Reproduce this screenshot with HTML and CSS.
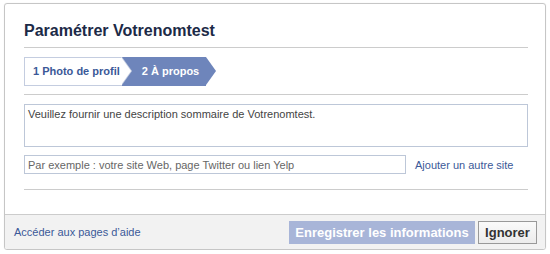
FILE: index.html
```html
<!DOCTYPE html>
<html>
<head>
    <meta charset="UTF-8">
    <title>Paramétrer Votrenomtest</title>
    <link rel="stylesheet" href="styles.css">
</head>
<body>
    <div class="dialog">
        <div class="dialog-body">
            <h2 class="dialog-title">Paramétrer Votrenomtest</h2>
            <div class="steps">
                <div class="step step-done">1 Photo de profil</div>
                <div class="step step-current">2 À propos</div>
            </div>
            <div class="rule"></div>
            <textarea class="about" placeholder="Veuillez fournir une description sommaire de Votrenomtest."></textarea>
            <div class="site-row">
                <input type="text" class="site" placeholder="Par exemple : votre site Web, page Twitter ou lien Yelp">
                <a href="#" class="link">Ajouter un autre site</a>
            </div>
            <div class="rule rule-end"></div>
        </div>
        <div class="dialog-footer">
            <a href="#" class="link">Accéder aux pages d’aide</a>
            <div class="buttons">
                <button class="btn btn-save" disabled>Enregistrer les informations</button>
                <button class="btn btn-skip">Ignorer</button>
            </div>
        </div>
    </div>
</body>
</html>
```

FILE: styles.css
```css
* {
    margin: 0;
    padding: 0;
    box-sizing: border-box;
}
body {
    font-family: "Liberation Sans", Arial, sans-serif;
    font-size: 11px;
    color: #333;
    background-color: #fff;
}
.dialog {
    width: 542px;
    height: 247px;
    margin: 3px 0 0 4px;
    border: 1px solid #c6c6c6;
    border-radius: 3px;
    box-shadow: 0 0 1px #ddd;
    display: flex;
    flex-direction: column;
    overflow: hidden;
}
.dialog-body {
    flex: 1;
    padding: 17px 17px 0 19px;
}
.dialog-title {
    font-size: 16px;
    line-height: 20px;
    color: #1c2a47;
    padding-bottom: 6px;
    border-bottom: 1px solid #cccccc;
}
.rule {
    border-bottom: 1px solid #cccccc;
}
.rule-end {
    margin-top: 15px;
}

/* étapes */
.steps {
    display: flex;
    height: 29px;
    margin: 9px 0 8px;
}
.step {
    position: relative;
    font-weight: bold;
    line-height: 27px;
    white-space: nowrap;
}
.step-done {
    z-index: 2;
    color: #3b5998;
    background-color: #fff;
    border: 1px solid #c4cde0;
    border-right: none;
    padding: 0 2px 0 8px;
}
.step-done:before,
.step-done:after {
    content: "";
    position: absolute;
    top: -1px;
    right: -10px;
    border-top: 14.5px solid transparent;
    border-bottom: 14.5px solid transparent;
    border-left: 10px solid #c4cde0;
}
.step-done:after {
    right: -9px;
    border-left-color: #fff;
}
.step-current {
    z-index: 1;
    color: #fff;
    background-color: #6e85bb;
    padding: 1px 7px 0 20px;
}
.step-current:after {
    content: "";
    position: absolute;
    top: 0;
    right: -10px;
    border-top: 14.5px solid transparent;
    border-bottom: 14.5px solid transparent;
    border-left: 10px solid #6e85bb;
}

/* champs */
.about {
    display: block;
    width: 100%;
    height: 43px;
    margin-top: 9px;
    padding: 3px;
    border: 1px solid #bdc7d8;
    resize: none;
    font-family: inherit;
    font-size: 11px;
    color: #333;
    outline: none;
}
.about::placeholder {
    color: #444;
}
.site-row {
    display: flex;
    align-items: center;
    margin-top: 8px;
}
.site {
    width: 382px;
    height: 19px;
    padding: 0 3px;
    border: 1px solid #bdc7d8;
    font-family: inherit;
    font-size: 11px;
    outline: none;
}
.site::placeholder {
    color: #666;
}
.site-row .link {
    margin-left: 9px;
}
.link {
    color: #3b5998;
    text-decoration: none;
    font-size: 11px;
}

/* pied */
.dialog-footer {
    height: 35px;
    background-color: #f2f2f2;
    border-top: 1px solid #cccccc;
    display: flex;
    align-items: center;
    justify-content: space-between;
    padding: 0 8px 0 9px;
}
.buttons {
    display: flex;
    gap: 3px;
}
.btn {
    height: 23px;
    font-family: inherit;
    font-size: 13px;
    font-weight: bold;
    padding: 0;
    white-space: nowrap;
}
.btn-save {
    width: 186px;
    color: #fff;
    background-color: #a8b5d8;
    border: 1px solid #a8b5d8;
}
.btn-skip {
    width: 59px;
    color: #333;
    background: linear-gradient(#fafafa, #ececec);
    border: 1px solid #999;
}
```
